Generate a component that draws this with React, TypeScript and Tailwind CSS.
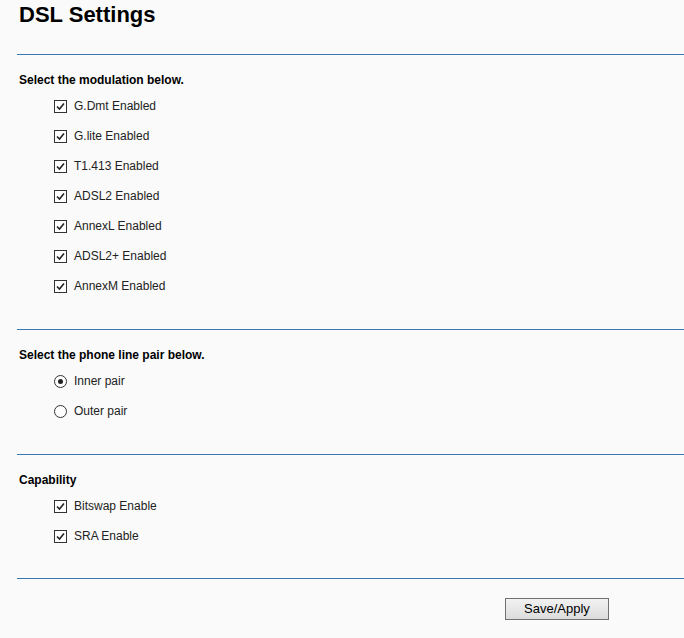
import React from "react";

const modulations = [
  "G.Dmt Enabled",
  "G.lite Enabled",
  "T1.413 Enabled",
  "ADSL2 Enabled",
  "AnnexL Enabled",
  "ADSL2+ Enabled",
  "AnnexM Enabled",
];

function Check() {
  return (
    <span className="w-[13px] h-[13px] border border-[#333] bg-white flex items-center justify-center mt-[3px]">
      <svg width="9" height="9" viewBox="0 0 9 9">
        <path d="M1 4.5 L3.5 7 L8 1.5" fill="none" stroke="#222" strokeWidth="1.6" />
      </svg>
    </span>
  );
}

function Radio({ on }: { on: boolean }) {
  return (
    <span className="w-[13px] h-[13px] rounded-full border border-[#333] bg-white flex items-center justify-center mt-[2px]">
      {on && <span className="w-[5px] h-[5px] rounded-full bg-[#222]" />}
    </span>
  );
}

function Row({ children, label }: { children: React.ReactNode; label: string }) {
  return (
    <div className="h-[30px] flex items-center pl-[54px] gap-[7px]">
      {children}
      <span className="text-[12px] text-[#222] mt-[2px]">{label}</span>
    </div>
  );
}

function Line() {
  return <div className="ml-[17px] h-px bg-[#3a79b0]" />;
}

function Heading({ text }: { text: string }) {
  return (
    <div className="h-[22px] flex items-center pl-[19px] pt-[2px] text-[12px] font-bold text-black">
      {text}
    </div>
  );
}

export default function App() {
  return (
    <div className="w-[684px] h-[638px] bg-[#fafafa] overflow-hidden font-['Liberation_Sans',Arial,sans-serif]">
      <div className="h-[54px] pt-[2px] pl-[19px]">
        <h1 className="text-[22px] leading-[25px] font-bold text-black">DSL Settings</h1>
      </div>
      <Line />

      <div className="mt-[13px]">
        <Heading text="Select the modulation below." />
        {modulations.map((m) => (
          <Row key={m} label={m}>
            <Check />
          </Row>
        ))}
      </div>

      <div className="mt-[29px]">
        <Line />
      </div>
      <div className="mt-[13px]">
        <Heading text="Select the phone line pair below." />
        <Row label="Inner pair">
          <Radio on />
        </Row>
        <Row label="Outer pair">
          <Radio on={false} />
        </Row>
      </div>

      <div className="mt-[29px]">
        <Line />
      </div>
      <div className="mt-[13px]">
        <Heading text="Capability" />
        <Row label="Bitswap Enable">
          <Check />
        </Row>
        <Row label="SRA Enable">
          <Check />
        </Row>
      </div>

      <div className="mt-[28px]">
        <Line />
      </div>
      <div className="pt-[19px] pl-[505px] flex">
        <button className="w-[104px] h-[22px] border border-[#707070] bg-gradient-to-b from-[#f2f2f2] to-[#dcdcdc] text-[13px] text-black flex items-center justify-center">
          Save/Apply
        </button>
      </div>
    </div>
  );
}
